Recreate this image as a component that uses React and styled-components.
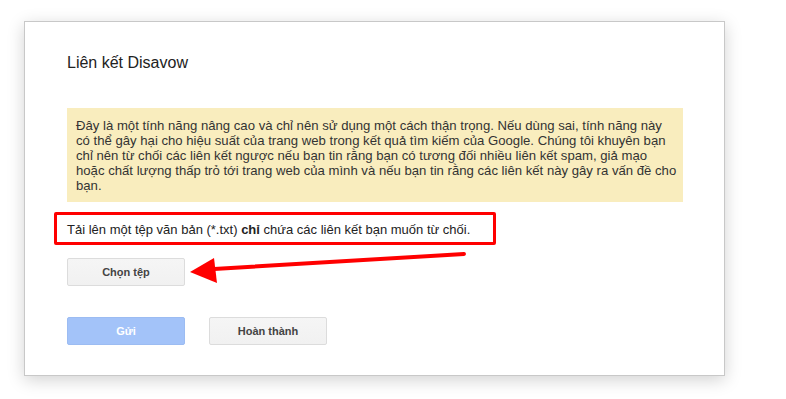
import React from "react";
import styled, { createGlobalStyle } from "styled-components";

const GlobalStyle = createGlobalStyle`
  body {
    margin: 0;
    background: #fff;
    font-family: "Liberation Sans", Arial, sans-serif;
  }
`;

const Page = styled.div`
  width: 786px;
  height: 399px;
  padding: 21px 0 0 24px;
  box-sizing: border-box;
  overflow: hidden;
`;

const Dialog = styled.div`
  width: 701px;
  height: 355px;
  box-sizing: border-box;
  background: #fff;
  border: 1px solid #c8c8c8;
  box-shadow: 0 4px 16px rgba(0, 0, 0, 0.18);
  padding: 31px 42px 0 42px;
  display: flex;
  flex-direction: column;
`;

const Title = styled.h2`
  margin: 0;
  font-size: 16px;
  line-height: 20px;
  font-weight: normal;
  color: #222;
`;

const Warning = styled.div`
  margin-top: 35px;
  width: 616px;
  box-sizing: border-box;
  background: #f9edbe;
  padding: 10px 0 9px 9px;
  font-size: 13.15px;
  line-height: 15px;
  color: #333;
  white-space: nowrap;
`;

const Instruction = styled.p`
  position: relative;
  margin: 20px 0 0;
  font-size: 13px;
  line-height: 15px;
  color: #222;
  align-self: flex-start;

  b {
    font-weight: bold;
  }

  &::after {
    content: "";
    position: absolute;
    left: -13px;
    top: -10px;
    right: -26px;
    bottom: -8px;
    border: 3.5px solid #f00;
    border-radius: 2px;
  }
`;

const FileRow = styled.div`
  position: relative;
  margin-top: 21px;
  display: flex;
`;

const Actions = styled.div`
  margin-top: 31px;
  display: flex;
  gap: 24px;
`;

const Button = styled.button`
  width: 118px;
  height: 28px;
  box-sizing: border-box;
  border-radius: 2px;
  font-family: "Liberation Sans", Arial, sans-serif;
  font-size: 11px;
  font-weight: bold;
  padding: 0;
  cursor: default;
  border: 1px solid ${(p) => (p.$primary ? "#9cbcf2" : "#dcdcdc")};
  background: ${(p) =>
    p.$primary ? "#a3c3f9" : "linear-gradient(#f5f5f5, #f1f1f1)"};
  color: ${(p) => (p.$primary ? "#fff" : "#444")};
`;

const Arrow = styled.svg`
  position: absolute;
  left: 123px;
  top: -8px;
  overflow: visible;
`;

const warningLines = [
  "Đây là một tính năng nâng cao và chỉ nên sử dụng một cách thận trọng. Nếu dùng sai, tính năng này",
  "có thể gây hại cho hiệu suất của trang web trong kết quả tìm kiếm của Google. Chúng tôi khuyên bạn",
  "chỉ nên từ chối các liên kết ngược nếu bạn tin rằng bạn có tương đối nhiều liên kết spam, giả mạo",
  "hoặc chất lượng thấp trỏ tới trang web của mình và nếu bạn tin rằng các liên kết này gây ra vấn đề cho",
  "bạn.",
];

export default function App() {
  return (
    <>
      <GlobalStyle />
      <Page>
        <Dialog>
          <Title>Liên kết Disavow</Title>
          <Warning>
            {warningLines.map((line, i) => (
              <React.Fragment key={i}>
                {line}
                {i < warningLines.length - 1 && <br />}
              </React.Fragment>
            ))}
          </Warning>
          <Instruction>
            Tải lên một tệp văn bản (*.txt) <b>chỉ</b> chứa các liên kết bạn muốn từ chối.
          </Instruction>
          <FileRow>
            <Button>Chọn tệp</Button>
            <Arrow width="280" height="40" viewBox="0 0 280 40">
              <line x1="24" y1="19" x2="274" y2="4" stroke="#f00" strokeWidth="4" strokeLinecap="round" />
              <polygon points="0,22 24,8 27,33" fill="#f00" />
            </Arrow>
          </FileRow>
          <Actions>
            <Button $primary>Gửi</Button>
            <Button>Hoàn thành</Button>
          </Actions>
        </Dialog>
      </Page>
    </>
  );
}
